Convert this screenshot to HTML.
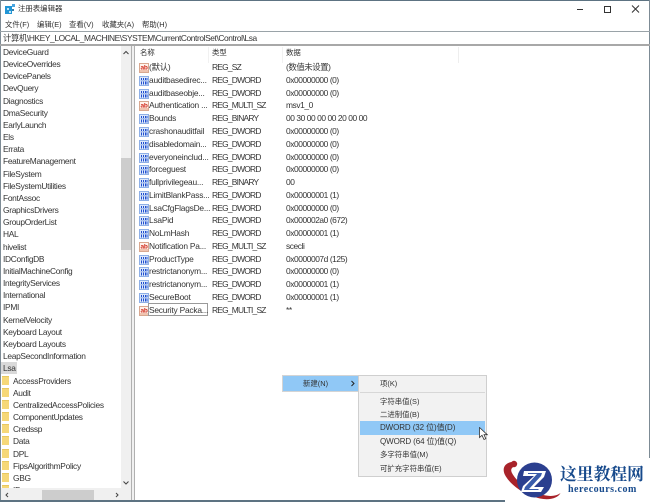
<!DOCTYPE html>
<html lang="zh"><head><meta charset="utf-8"><style>
html,body{margin:0;padding:0}
body{width:650px;height:502px;overflow:hidden;background:#fff;position:relative;font:8.4px "Liberation Sans","Noto Sans CJK SC",sans-serif;color:#333;letter-spacing:-.3px}
.a{position:absolute;white-space:nowrap;line-height:12px}
[style*="left:212px"]{letter-spacing:-.75px}
[style*="left:286px"]{letter-spacing:-.42px}
[style*="left:149px"]{letter-spacing:-.22px}
.b{position:absolute}
svg.i{position:absolute;left:139px;width:10px;height:10px;margin-top:.5px}
.f{position:absolute;left:2px;width:7px;height:8px;background:#f6d878;border-top:1px solid #e8c860}
.c{font-size:7.4px!important;letter-spacing:0!important}
</style></head><body>
<div class="b" style="left:0;top:0;width:650px;height:1px;background:#5d7382"></div>
<div class="b" style="left:0;top:0;width:1px;height:502px;background:#7d8b95"></div>
<div class="b" style="left:649px;top:0;width:1px;height:502px;background:#7d8b95"></div>
<div class="b" style="left:0;top:500px;width:650px;height:2px;background:#5d7382"></div>

<svg class="b" style="left:5px;top:4px;width:10px;height:10px" viewBox="0 0 10 10"><rect x="0" y="2" width="7" height="8" fill="#2196d6"/><rect x="2" y="4" width="2" height="2" fill="#bfe3f7"/><rect x="4" y="7" width="2" height="2" fill="#bfe3f7"/><rect x="7" y="0" width="3" height="3" fill="#49a5e0"/><rect x="7" y="5" width="2" height="2" fill="#3b7fa8"/></svg>
<div class="a c" style="left:18px;top:3px;">注册表编辑器</div>
<svg class="b" style="left:572px;top:3px;width:70px;height:12px" viewBox="0 0 70 12" fill="none" stroke="#333"><path d="M5 6.500H11"/><rect x="32.500" y="3.500" width="6" height="6"/><path d="M60 2.500L67 9.500M67 2.500L60 9.500"/></svg>

<div class="a c" style="left:5px;top:19px">文件(F)</div>
<div class="a c" style="left:37px;top:19px">编辑(E)</div>
<div class="a c" style="left:69px;top:19px">查看(V)</div>
<div class="a c" style="left:102px;top:19px">收藏夹(A)</div>
<div class="a c" style="left:142px;top:19px">帮助(H)</div>

<div class="b" style="left:0;top:31px;width:650px;height:1px;background:#9aa3a8"></div>
<div class="a" style="left:3px;top:32px;letter-spacing:-.4px">计算机\HKEY_LOCAL_MACHINE\SYSTEM\CurrentControlSet\Control\Lsa</div>
<div class="b" style="left:0;top:44px;width:650px;height:2px;background:#a8a8a8"></div>

<!-- tree -->
<div class="a" style="left:3px;top:46px">DeviceGuard</div>
<div class="a" style="left:3px;top:58px">DeviceOverrides</div>
<div class="a" style="left:3px;top:70px">DevicePanels</div>
<div class="a" style="left:3px;top:82px">DevQuery</div>
<div class="a" style="left:3px;top:95px">Diagnostics</div>
<div class="a" style="left:3px;top:107px">DmaSecurity</div>
<div class="a" style="left:3px;top:119px">EarlyLaunch</div>
<div class="a" style="left:3px;top:131px">Els</div>
<div class="a" style="left:3px;top:143px">Errata</div>
<div class="a" style="left:3px;top:155px">FeatureManagement</div>
<div class="a" style="left:3px;top:168px">FileSystem</div>
<div class="a" style="left:3px;top:180px">FileSystemUtilities</div>
<div class="a" style="left:3px;top:192px">FontAssoc</div>
<div class="a" style="left:3px;top:204px">GraphicsDrivers</div>
<div class="a" style="left:3px;top:216px">GroupOrderList</div>
<div class="a" style="left:3px;top:228px">HAL</div>
<div class="a" style="left:3px;top:241px">hivelist</div>
<div class="a" style="left:3px;top:253px">IDConfigDB</div>
<div class="a" style="left:3px;top:265px">InitialMachineConfig</div>
<div class="a" style="left:3px;top:277px">IntegrityServices</div>
<div class="a" style="left:3px;top:289px">International</div>
<div class="a" style="left:3px;top:301px">IPMI</div>
<div class="a" style="left:3px;top:314px">KernelVelocity</div>
<div class="a" style="left:3px;top:326px">Keyboard Layout</div>
<div class="a" style="left:3px;top:338px">Keyboard Layouts</div>
<div class="a" style="left:3px;top:350px">LeapSecondInformation</div>
<div class="b" style="left:1px;top:362px;width:16px;height:12px;background:#d9d9d9"></div>
<div class="a" style="left:3px;top:362px">Lsa</div>
<div class="f" style="top:376px"></div><div class="a" style="left:13px;top:375px">AccessProviders</div>
<div class="f" style="top:388px"></div><div class="a" style="left:13px;top:387px">Audit</div>
<div class="f" style="top:400px"></div><div class="a" style="left:13px;top:399px">CentralizedAccessPolicies</div>
<div class="f" style="top:412px"></div><div class="a" style="left:13px;top:411px">ComponentUpdates</div>
<div class="f" style="top:424px"></div><div class="a" style="left:13px;top:423px">Credssp</div>
<div class="f" style="top:436px"></div><div class="a" style="left:13px;top:435px">Data</div>
<div class="f" style="top:449px"></div><div class="a" style="left:13px;top:448px">DPL</div>
<div class="f" style="top:461px"></div><div class="a" style="left:13px;top:460px">FipsAlgorithmPolicy</div>
<div class="f" style="top:473px"></div><div class="a" style="left:13px;top:472px">GBG</div>
<div class="f" style="top:485px;height:2px"></div><div class="a" style="left:13px;top:484px;height:4px;overflow:hidden">ID</div>

<!-- tree scrollbars -->
<div class="b" style="left:121px;top:46px;width:10px;height:442px;background:#f0f0f0"></div>
<div class="b" style="left:121px;top:158px;width:10px;height:92px;background:#cdcdcd"></div>
<svg class="b" style="left:121px;top:48px;width:10px;height:10px" viewBox="0 0 10 10" fill="none" stroke="#444"><path d="M2.500 6L5 3.500L7.500 6"/></svg>
<svg class="b" style="left:121px;top:479px;width:10px;height:8px" viewBox="0 0 10 8" fill="none" stroke="#444"><path d="M2.500 2.500L5 5L7.500 2.500"/></svg>
<div class="b" style="left:1px;top:488px;width:130px;height:12px;background:#f0f0f0"></div>
<div class="b" style="left:42px;top:490px;width:52px;height:10px;background:#cdcdcd"></div>
<svg class="b" style="left:3px;top:490px;width:120px;height:10px" viewBox="0 0 120 10" fill="none" stroke="#444"><path d="M5 3L3 5L5 7M113 3L115 5L113 7"/></svg>
<div class="b" style="left:131px;top:46px;width:1px;height:454px;background:#b0b0b0"></div>
<div class="b" style="left:132px;top:46px;width:2px;height:454px;background:#f0f0f0"></div>
<div class="b" style="left:134px;top:46px;width:1px;height:454px;background:#b0b0b0"></div>

<!-- header -->
<div class="a c" style="left:140px;top:47px">名称</div>
<div class="a c" style="left:212px;top:47px">类型</div>
<div class="a c" style="left:286px;top:47px">数据</div>
<div class="b" style="left:208px;top:47px;width:1px;height:16px;background:#f1f1f1"></div>
<div class="b" style="left:282px;top:47px;width:1px;height:16px;background:#f1f1f1"></div>
<div class="b" style="left:458px;top:47px;width:1px;height:16px;background:#eeeeee"></div>

<svg width="0" height="0" style="position:absolute"><defs>
<symbol id="s" viewBox="0 0 10 10"><rect x=".5" y=".5" width="9" height="9" fill="#fff3ec" stroke="#d8a890"/><rect x="1" y="7" width="8" height="2" fill="#efc4b0"/><text x="5" y="6.600" font-size="6.500" font-weight="bold" font-family="Liberation Sans" text-anchor="middle" letter-spacing="-.3" fill="#d02a1a">ab</text></symbol>
<symbol id="d" viewBox="0 0 10 10"><rect x=".5" y=".5" width="9" height="9" fill="#dce8fb" stroke="#8fb0e6"/><path d="M2.500 2v2M4.500 2v2M6.500 2v2M8 2v2M2.500 5.500v3M4.500 5.500v3M6.500 5.500v3M8 5.500v3" stroke="#1f4fd0" stroke-width="1"/><path d="M1.500 4.800H8.500" stroke="#7f9fe0" stroke-width=".7"/></symbol>
</defs></svg>

<svg class="i" style="top:62px"><use href="#s"/></svg>
<div class="a" style="left:149px;top:61px">(默认)</div><div class="a" style="left:212px;top:61px">REG_SZ</div><div class="a" style="left:286px;top:61px">(数值未设置)</div>
<svg class="i" style="top:75px"><use href="#d"/></svg>
<div class="a" style="left:149px;top:74px">auditbasedirec...</div><div class="a" style="left:212px;top:74px">REG_DWORD</div><div class="a" style="left:286px;top:74px">0x00000000 (0)</div>
<svg class="i" style="top:88px"><use href="#d"/></svg>
<div class="a" style="left:149px;top:87px">auditbaseobje...</div><div class="a" style="left:212px;top:87px">REG_DWORD</div><div class="a" style="left:286px;top:87px">0x00000000 (0)</div>
<svg class="i" style="top:100px"><use href="#s"/></svg>
<div class="a" style="left:149px;top:99px">Authentication ...</div><div class="a" style="left:212px;top:99px">REG_MULTI_SZ</div><div class="a" style="left:286px;top:99px">msv1_0</div>
<svg class="i" style="top:113px"><use href="#d"/></svg>
<div class="a" style="left:149px;top:112px">Bounds</div><div class="a" style="left:212px;top:112px">REG_BINARY</div><div class="a" style="left:286px;top:112px">00 30 00 00 00 20 00 00</div>
<svg class="i" style="top:126px"><use href="#d"/></svg>
<div class="a" style="left:149px;top:125px">crashonauditfail</div><div class="a" style="left:212px;top:125px">REG_DWORD</div><div class="a" style="left:286px;top:125px">0x00000000 (0)</div>
<svg class="i" style="top:139px"><use href="#d"/></svg>
<div class="a" style="left:149px;top:138px">disabledomain...</div><div class="a" style="left:212px;top:138px">REG_DWORD</div><div class="a" style="left:286px;top:138px">0x00000000 (0)</div>
<svg class="i" style="top:152px"><use href="#d"/></svg>
<div class="a" style="left:149px;top:151px">everyoneinclud...</div><div class="a" style="left:212px;top:151px">REG_DWORD</div><div class="a" style="left:286px;top:151px">0x00000000 (0)</div>
<svg class="i" style="top:164px"><use href="#d"/></svg>
<div class="a" style="left:149px;top:163px">forceguest</div><div class="a" style="left:212px;top:163px">REG_DWORD</div><div class="a" style="left:286px;top:163px">0x00000000 (0)</div>
<svg class="i" style="top:177px"><use href="#d"/></svg>
<div class="a" style="left:149px;top:176px">fullprivilegeau...</div><div class="a" style="left:212px;top:176px">REG_BINARY</div><div class="a" style="left:286px;top:176px">00</div>
<svg class="i" style="top:190px"><use href="#d"/></svg>
<div class="a" style="left:149px;top:189px">LimitBlankPass...</div><div class="a" style="left:212px;top:189px">REG_DWORD</div><div class="a" style="left:286px;top:189px">0x00000001 (1)</div>
<svg class="i" style="top:203px"><use href="#d"/></svg>
<div class="a" style="left:149px;top:202px">LsaCfgFlagsDe...</div><div class="a" style="left:212px;top:202px">REG_DWORD</div><div class="a" style="left:286px;top:202px">0x00000000 (0)</div>
<svg class="i" style="top:215px"><use href="#d"/></svg>
<div class="a" style="left:149px;top:214px">LsaPid</div><div class="a" style="left:212px;top:214px">REG_DWORD</div><div class="a" style="left:286px;top:214px">0x000002a0 (672)</div>
<svg class="i" style="top:228px"><use href="#d"/></svg>
<div class="a" style="left:149px;top:227px">NoLmHash</div><div class="a" style="left:212px;top:227px">REG_DWORD</div><div class="a" style="left:286px;top:227px">0x00000001 (1)</div>
<svg class="i" style="top:241px"><use href="#s"/></svg>
<div class="a" style="left:149px;top:240px">Notification Pa...</div><div class="a" style="left:212px;top:240px">REG_MULTI_SZ</div><div class="a" style="left:286px;top:240px">scecli</div>
<svg class="i" style="top:254px"><use href="#d"/></svg>
<div class="a" style="left:149px;top:253px">ProductType</div><div class="a" style="left:212px;top:253px">REG_DWORD</div><div class="a" style="left:286px;top:253px">0x0000007d (125)</div>
<svg class="i" style="top:266px"><use href="#d"/></svg>
<div class="a" style="left:149px;top:265px">restrictanonym...</div><div class="a" style="left:212px;top:265px">REG_DWORD</div><div class="a" style="left:286px;top:265px">0x00000000 (0)</div>
<svg class="i" style="top:279px"><use href="#d"/></svg>
<div class="a" style="left:149px;top:278px">restrictanonym...</div><div class="a" style="left:212px;top:278px">REG_DWORD</div><div class="a" style="left:286px;top:278px">0x00000001 (1)</div>
<svg class="i" style="top:292px"><use href="#d"/></svg>
<div class="a" style="left:149px;top:291px">SecureBoot</div><div class="a" style="left:212px;top:291px">REG_DWORD</div><div class="a" style="left:286px;top:291px">0x00000001 (1)</div>
<svg class="i" style="top:305px"><use href="#s"/></svg>
<div class="b" style="left:148px;top:303px;width:60px;height:13px;border:1px solid #9a9a9a;box-sizing:border-box"></div>
<div class="a" style="left:149px;top:304px">Security Packa...</div><div class="a" style="left:212px;top:304px">REG_MULTI_SZ</div><div class="a" style="left:286px;top:304px">**</div>

<!-- context menu -->
<div class="b" style="left:282px;top:375px;width:77px;height:17px;background:#90c8f6;border:1px solid #d4d4d4;box-sizing:border-box"></div>
<div class="a c" style="left:303px;top:378px">新建(N)</div>
<svg class="b" style="left:350px;top:380px;width:6px;height:7px" viewBox="0 0 6 7" fill="none" stroke="#222"><path d="M1.500 1L4 3.500L1.500 6"/></svg>
<div class="b" style="left:358px;top:375px;width:129px;height:102px;background:#f2f2f2;border:1px solid #cfcfcf;box-sizing:border-box"></div>
<div class="b" style="left:360px;top:392px;width:125px;height:1px;background:#d7d7d7"></div>
<div class="b" style="left:360px;top:421px;width:125px;height:14px;background:#90c8f6"></div>
<div class="a c" style="left:380px;top:378px">项(K)</div>
<div class="a c" style="left:380px;top:396px">字符串值(S)</div>
<div class="a c" style="left:380px;top:409px">二进制值(B)</div>
<div class="a" style="left:380px;top:422px;font-size:8px;letter-spacing:-.1px">DWORD (32 位)值(D)</div>
<div class="a" style="left:380px;top:436px;font-size:8px;letter-spacing:-.1px">QWORD (64 位)值(Q)</div>
<div class="a c" style="left:380px;top:449px">多字符串值(M)</div>
<div class="a c" style="left:380px;top:463px">可扩充字符串值(E)</div>
<svg class="b" style="left:479px;top:427px;width:10px;height:14px" viewBox="0 0 10 14"><path d="M.5.500V10.500L3 8.300L5 12.500L6.800 11.700L5 7.700H8.300Z" fill="#fff" stroke="#333" stroke-width=".8"/></svg>

<!-- watermark -->
<div class="b" style="left:505px;top:458px;width:145px;height:44px;background:#fff"></div>
<svg class="b" style="left:503px;top:459px;width:62px;height:43px" viewBox="0 0 62 43">
<path d="M9 3C1 4-1 10 2 16C8 27 22 36 37 39.500C47 41.500 55 39 57.500 34C52 38 45 37.500 36 35C25 31 13 22 9 14C7 10 9 8 13 7Z" fill="#a8232a"/>
<circle cx="11" cy="5" r="3.200" fill="#a8232a"/>
<circle cx="31.500" cy="21" r="17.500" fill="#2b3f8f"/>
<path d="M21 12H43L41 18L31 28H41L38 33H18L20 27L31 17H20Z" fill="#fff"/>
<path d="M25 14H39L38 17L26 30H36L35 31H21L22 28L34 15H25Z" fill="#3a5cab"/>
</svg>
<div class="a" style="left:560px;top:463px;font:bold 16.800px/20px 'Noto Serif CJK SC','Noto Sans CJK SC',serif;color:#174a8c;letter-spacing:0">这里教程网</div>
<div class="a" style="left:568px;top:484px;font:bold 10px/12px 'Liberation Serif',serif;color:#174a8c;letter-spacing:.5px">herecours.com</div>
</body></html>
